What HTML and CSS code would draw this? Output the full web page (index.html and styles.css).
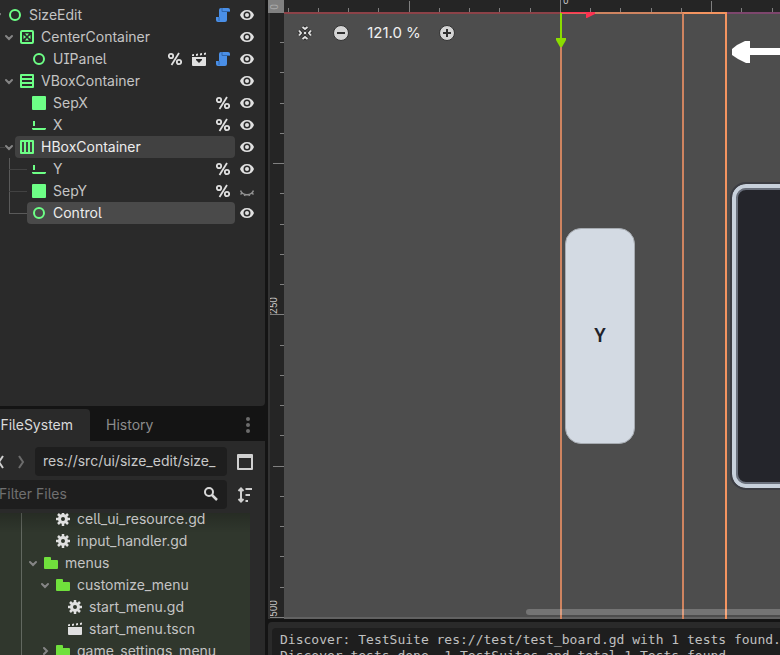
FILE: index.html
```html
<!DOCTYPE html>
<html lang="en">
<head>
    <meta charset="UTF-8">
    <meta name="viewport" content="width=device-width, initial-scale=1.0">
    <title>SizeEdit - Scene Editor</title>
    <link rel="stylesheet" href="styles.css">
</head>
<body>
    <!-- Shared icons -->
    <svg class="sprite" aria-hidden="true">
        <symbol id="i-control" viewBox="0 0 14 14"><circle cx="7" cy="7" r="5" fill="none" stroke="#6dff86" stroke-width="2"/></symbol>
        <symbol id="i-center" viewBox="0 0 14 14"><rect x="1" y="1" width="12" height="12" rx="1" fill="none" stroke="#6dff86" stroke-width="2"/><path d="M5 3.500h4L7 6zM5 10.500h4L7 8zM3.500 5v4L6 7zM10.500 5v4L8 7z" fill="#6dff86"/></symbol>
        <symbol id="i-vbox" viewBox="0 0 14 14"><path d="M1 1h12v12H1zM1 5h12M1 9h12" fill="none" stroke="#6dff86" stroke-width="2" stroke-linejoin="round"/></symbol>
        <symbol id="i-hbox" viewBox="0 0 14 14"><path d="M1 1h12v12H1zM5 1v12M9 1v12" fill="none" stroke="#6dff86" stroke-width="2" stroke-linejoin="round"/></symbol>
        <symbol id="i-rect" viewBox="0 0 14 14"><rect width="14" height="14" rx="1" fill="#6dff86"/></symbol>
        <symbol id="i-line" viewBox="0 0 14 14"><path d="M1 3h2v5H1zM0 10h14v1l-1 1H1l-1-1z" fill="#6dff86"/></symbol>
        <symbol id="i-eye" viewBox="0 0 14 14"><path d="M7 2C3.500 2 1 4 0 7c1 3 3.500 5 7 5s6-2 7-5c-1-3-3.500-5-7-5zm0 1.500a3.500 3.500 0 1 1 0 7 3.500 3.500 0 0 1 0-7z" fill="#e0e0e0" fill-rule="evenodd"/><circle cx="7" cy="7" r="2" fill="#e0e0e0"/></symbol>
        <symbol id="i-hidden" viewBox="0 0 14 14"><path d="M.5 6.500c2 5.500 11 5.500 13 0M2.500 8.500L.5 10.500M5 10l-.5 2M9 10l.5 2M11.500 8.500l2 2" fill="none" stroke="#929292" stroke-width="1.500"/></symbol>
        <symbol id="i-percent" viewBox="0 0 14 14"><circle cx="3" cy="4" r="2.200" fill="none" stroke="#e0e0e0" stroke-width="1.800"/><circle cx="11" cy="10" r="2.200" fill="none" stroke="#e0e0e0" stroke-width="1.800"/><path d="M11 1L3.500 13" stroke="#e0e0e0" stroke-width="1.800"/></symbol>
        <symbol id="i-script" viewBox="0 0 14 14"><path d="M5 0h7a2 2 0 0 1 2 2v2h-3v8a2 2 0 0 1-2 2H2a2 2 0 0 1-2-2V9h3V2a2 2 0 0 1 2-2z" fill="#4a8fe7"/><path d="M6 0v3.500h8M3 9v4" fill="none" stroke="#2f66ad" stroke-width="1"/></symbol>
        <symbol id="i-open" viewBox="0 0 14 14"><path d="M0 5h14v8a1 1 0 0 1-1 1H1a1 1 0 0 1-1-1z" fill="#e0e0e0"/><path d="M0 2.500L2 2v2H0zM4 2l2-.5v2L4 4zM8 1.500L10 1v2l-2 .5zM12 1l2-.5v2l-2 .5z" fill="#e0e0e0"/><path d="M4 7h6v1l-3 3-3-3z" fill="#2a2a2a"/></symbol>
        <symbol id="i-scene" viewBox="0 0 14 14"><path d="M0 5h14v7a1 1 0 0 1-1 1H1a1 1 0 0 1-1-1z" fill="#e0e0e0"/><path d="M0 2.500L2 2v2H0zM4 2l2-.5v2L4 4zM8 1.500L10 1v2l-2 .5zM12 1l2-.5v2l-2 .5z" fill="#e0e0e0"/></symbol>
        <symbol id="i-gear" viewBox="0 0 14 14"><circle cx="7" cy="7" r="3.500" fill="none" stroke="#e0e0e0" stroke-width="3"/><path d="M7 0v3M7 11v3M0 7h3M11 7h3M2 2l2 2M10 10l2 2M2 12l2-2M10 4l2-2" stroke="#e0e0e0" stroke-width="2.500"/></symbol>
        <symbol id="i-folder" viewBox="0 0 14 14"><path d="M1 1h5a1 1 0 0 1 1 1v2h6a1 1 0 0 1 1 1v7a1 1 0 0 1-1 1H1a1 1 0 0 1-1-1V2a1 1 0 0 1 1-1z" fill="#70e03c"/></symbol>
        <symbol id="i-down" viewBox="0 0 12 12"><path d="M3 5l3 3 3-3" fill="none" stroke="#858585" stroke-width="2" stroke-linecap="round"/></symbol>
        <symbol id="i-right" viewBox="0 0 12 12"><path d="M5 3l3 3-3 3" fill="none" stroke="#858585" stroke-width="2" stroke-linecap="round"/></symbol>
    </svg>

    <aside class="dock">
        <section class="panel scene">
            <ul class="tree">
                <li>
                    <div class="row"><svg class="toggle"><use href="#i-down"/></svg><div class="item"><svg class="icon"><use href="#i-control"/></svg><span class="name">SizeEdit</span><svg class="icon"><use href="#i-script"/></svg></div><svg class="icon eye"><use href="#i-eye"/></svg></div>
                    <ul>
                        <li>
                            <div class="row"><svg class="toggle"><use href="#i-down"/></svg><div class="item"><svg class="icon"><use href="#i-center"/></svg><span class="name">CenterContainer</span></div><svg class="icon eye"><use href="#i-eye"/></svg></div>
                            <ul>
                                <li><div class="row"><span class="toggle"></span><div class="item"><svg class="icon"><use href="#i-control"/></svg><span class="name">UIPanel</span><svg class="icon"><use href="#i-percent"/></svg><svg class="icon"><use href="#i-open"/></svg><svg class="icon"><use href="#i-script"/></svg></div><svg class="icon eye"><use href="#i-eye"/></svg></div></li>
                            </ul>
                        </li>
                        <li>
                            <div class="row"><svg class="toggle"><use href="#i-down"/></svg><div class="item"><svg class="icon"><use href="#i-vbox"/></svg><span class="name">VBoxContainer</span></div><svg class="icon eye"><use href="#i-eye"/></svg></div>
                            <ul>
                                <li><div class="row"><span class="toggle"></span><div class="item"><svg class="icon"><use href="#i-rect"/></svg><span class="name">SepX</span><svg class="icon"><use href="#i-percent"/></svg></div><svg class="icon eye"><use href="#i-eye"/></svg></div></li>
                                <li><div class="row"><span class="toggle"></span><div class="item"><svg class="icon"><use href="#i-line"/></svg><span class="name">X</span><svg class="icon"><use href="#i-percent"/></svg></div><svg class="icon eye"><use href="#i-eye"/></svg></div></li>
                            </ul>
                        </li>
                        <li>
                            <div class="row branch"><svg class="toggle"><use href="#i-down"/></svg><div class="item selected"><svg class="icon"><use href="#i-hbox"/></svg><span class="name">HBoxContainer</span></div><svg class="icon eye"><use href="#i-eye"/></svg></div>
                            <ul class="guides">
                                <li><div class="row"><span class="toggle"></span><div class="item"><svg class="icon"><use href="#i-line"/></svg><span class="name">Y</span><svg class="icon"><use href="#i-percent"/></svg></div><svg class="icon eye"><use href="#i-eye"/></svg></div></li>
                                <li><div class="row"><span class="toggle"></span><div class="item"><svg class="icon"><use href="#i-rect"/></svg><span class="name">SepY</span><svg class="icon"><use href="#i-percent"/></svg></div><svg class="icon eye"><use href="#i-hidden"/></svg></div></li>
                                <li class="active"><div class="row"><span class="toggle"></span><div class="item selected focus"><svg class="icon"><use href="#i-control"/></svg><span class="name">Control</span></div><svg class="icon eye"><use href="#i-eye"/></svg></div></li>
                            </ul>
                        </li>
                    </ul>
                </li>
            </ul>
        </section>

        <section class="filesystem">
            <div class="tabs">
                <button class="tab current">FileSystem</button>
                <button class="tab">History</button>
                <button class="menu" aria-label="Dock options"><svg width="4" height="16"><circle cx="2" cy="2" r="2"/><circle cx="2" cy="8" r="2"/><circle cx="2" cy="14" r="2"/></svg></button>
            </div>
            <div class="files">
                <div class="bar">
                    <button class="nav" aria-label="Back"><svg width="8" height="14"><path d="M6 1L2 7l4 6"/></svg></button>
                    <button class="nav off" aria-label="Forward"><svg width="8" height="14"><path d="M2 1l4 6-4 6"/></svg></button>
                    <input class="field path" type="text" aria-label="Path" value="res://src/ui/size_edit/size_">
                    <button class="tool" aria-label="Toggle split mode"><svg width="16" height="16"><path d="M1 1h14v14H1zM0 3h16" fill="none" stroke="#d0d0d0" stroke-width="2" stroke-linejoin="round"/></svg></button>
                </div>
                <div class="bar">
                    <div class="filter">
                        <input class="field" type="text" aria-label="Filter files" placeholder="Filter Files">
                        <svg class="search" width="14" height="14"><circle cx="5" cy="5" r="4" fill="none" stroke="#d8d8d8" stroke-width="2"/><path d="M8 8l5 5" stroke="#d8d8d8" stroke-width="2.500"/></svg>
                    </div>
                    <button class="tool" aria-label="Sort files"><svg width="16" height="16"><path d="M4 2v12M1.500 4L4 1.500 6.500 4M1.500 12L4 14.500 6.500 12M8.500 2H15M8.500 8H13M8.500 14H11" fill="none" stroke="#d0d0d0" stroke-width="2"/></svg></button>
                </div>
                <div class="filetree">
                    <ul class="tree">
                        <li>
                            <ul>
                                <li><div class="row"><span class="toggle"></span><div class="item"><svg class="icon"><use href="#i-gear"/></svg><span class="name">cell_ui_resource.gd</span></div></div></li>
                                <li><div class="row"><span class="toggle"></span><div class="item"><svg class="icon"><use href="#i-gear"/></svg><span class="name">input_handler.gd</span></div></div></li>
                            </ul>
                        </li>
                        <li>
                            <div class="row"><svg class="toggle"><use href="#i-down"/></svg><div class="item"><svg class="icon"><use href="#i-folder"/></svg><span class="name">menus</span></div></div>
                            <ul>
                                <li>
                                    <div class="row"><svg class="toggle"><use href="#i-down"/></svg><div class="item"><svg class="icon"><use href="#i-folder"/></svg><span class="name">customize_menu</span></div></div>
                                    <ul>
                                        <li><div class="row"><span class="toggle"></span><div class="item"><svg class="icon"><use href="#i-gear"/></svg><span class="name">start_menu.gd</span></div></div></li>
                                        <li><div class="row"><span class="toggle"></span><div class="item"><svg class="icon"><use href="#i-scene"/></svg><span class="name">start_menu.tscn</span></div></div></li>
                                    </ul>
                                </li>
                                <li><div class="row"><svg class="toggle"><use href="#i-right"/></svg><div class="item"><svg class="icon"><use href="#i-folder"/></svg><span class="name">game_settings_menu</span></div></div></li>
                            </ul>
                        </li>
                    </ul>
                </div>
            </div>
        </section>
    </aside>

    <main class="editor">
        <div class="viewport">
            <div class="corner"><span>0</span></div>
            <div class="ruler-top">
                <svg width="100%" height="13" shape-rendering="crispEdges"><path d="M4.500 8v4M34.500 8v4M64.500 8v4M94.500 8v4M125.500 1v11M155.500 8v4M185.500 8v4M215.500 8v4M246.500 8v4M276.500 0v12M306.500 8v4M336.500 8v4M367.500 8v4M397.500 8v4M427.500 1v11M457.500 8v4M488.500 8v4"/></svg>
                <span class="mark zero">0</span>
            </div>
            <div class="ruler-left">
                <svg width="16" height="100%" shape-rendering="crispEdges"><path d="M12 29.500h4M12 59.500h4M12 90.500h4M12 120.500h4M5 150.500h11M12 180.500h4M12 211.500h4M12 241.500h4M12 271.500h4M0 301.500h16M12 332.500h4M12 362.500h4M12 392.500h4M12 422.500h4M5 453.500h11M12 483.500h4M12 513.500h4M12 543.500h4M12 574.500h4M0 604.500h16"/></svg>
                <span class="mark m250">250</span>
                <span class="mark m500">500</span>
            </div>
            <div class="canvas">
                <div class="axis"></div>
                <div class="bounds outer"></div>
                <div class="bounds inner"></div>
                <svg class="gizmo" width="40" height="40"><path d="M5 0h27" stroke="#fc3351" stroke-width="3"/><path d="M30 0v6h1l8-4V0z" fill="#fc3351"/><path d="M5 1v25" stroke="#8bdc00" stroke-width="2"/><path d="M0 26h10v2L6 35H4L0 28z" fill="#8bdc00"/></svg>
                <svg class="pointer" width="48" height="22"><path d="M0 8L5 4l8-4h5v7h30v7H18v8h-4l-8-4-6-4z" fill="#fff"/></svg>
                <div class="card">Y</div>
                <div class="frame"></div>
                <div class="zoom">
                    <button aria-label="Center view"><svg width="16" height="16"><path d="M5.500 2L8 4l2.500-2M5.500 14L8 12l2.500 2M2 5.500L4 8l-2 2.500M14 5.500L12 8l2 2.500" fill="none" stroke="#282828" stroke-width="4"/><path d="M5.500 2L8 4l2.500-2M5.500 14L8 12l2.500 2M2 5.500L4 8l-2 2.500M14 5.500L12 8l2 2.500" fill="none" stroke="#e0e0e0" stroke-width="2"/><rect x="7" y="7" width="2" height="2" fill="#e0e0e0"/></svg></button>
                    <button aria-label="Zoom out"><svg width="16" height="16"><circle cx="8" cy="8" r="7.500" fill="#d4d4d4" stroke="#333"/><path d="M4 8h8" stroke="#303030" stroke-width="2"/></svg></button>
                    <button class="level">121.0 %</button>
                    <button aria-label="Zoom in"><svg width="16" height="16"><circle cx="8" cy="8" r="7.500" fill="#d4d4d4" stroke="#333"/><path d="M4 8h8M8 4v8" stroke="#303030" stroke-width="2"/></svg></button>
                </div>
                <div class="scrollbar"></div>
            </div>
        </div>
        <section class="output">
            <pre>Discover: TestSuite res://test/test_board.gd with 1 tests found.
Discover tests done, 1 TestSuites and total 1 Tests found.</pre>
        </section>
    </main>
</body>
</html>
```
FILE: styles.css
```css
* {
    box-sizing: border-box;
}

body {
    margin: 0;
    height: 100vh;
    display: grid;
    grid-template-columns: 265px 1fr;
    grid-template-rows: 100%;
    gap: 3px;
    overflow: hidden;
    background: #141414;
    color: #c4c4c4;
    font: 14px/22px Inter, "Noto Sans", sans-serif;
    font-feature-settings: "ss04", "cv05", "cv08";
}

button {
    padding: 0;
    border: 0;
    background: none;
    color: inherit;
    font: inherit;
    font-feature-settings: inherit;
    cursor: pointer;
}

svg {
    display: block;
    flex: none;
}

.sprite {
    position: absolute;
    width: 0;
    height: 0;
}

/* Docks */
.dock {
    display: flex;
    flex-direction: column;
    gap: 3px;
    min-width: 0;
    overflow: hidden;
}

.panel {
    background: #2a2a2a;
}

.scene {
    flex: 1;
    padding-top: 4px;
    border-radius: 0 0 4px 0;
    overflow: hidden;
}

/* Trees */
.tree,
.tree ul {
    margin: 0;
    padding: 0;
    list-style: none;
}

.tree ul {
    padding-left: 12px;
}

.scene .tree {
    margin-left: -9px;
}

.row {
    display: flex;
    align-items: center;
    height: 22px;
}

.toggle {
    flex: none;
    width: 12px;
    height: 12px;
}

.icon {
    width: 14px;
    height: 14px;
}

.item {
    flex: 1;
    display: flex;
    align-items: center;
    gap: 10px;
    height: 22px;
    padding: 0 5px;
    border-radius: 4px;
}

.name {
    flex: 1;
    margin-left: -3px;
    white-space: nowrap;
}

.eye {
    margin: 0 11px 0 5px;
}

.selected {
    background: #414141;
    color: #ededed;
}

.focus {
    background: #4a4a4a;
}

.branch,
.guides,
.guides li {
    position: relative;
}

.branch::before,
.guides::before,
.guides li::before {
    content: "";
    position: absolute;
    background: #424242;
}

.branch::before {
    left: -6px;
    top: 11px;
    width: 8px;
    height: 1px;
}

.guides::before {
    left: 6px;
    top: 0;
    bottom: 11px;
    width: 1px;
    background: #5a5a5a;
}

.guides li::before {
    left: -6px;
    top: 11px;
    width: 18px;
    height: 1px;
}

.guides .active::before {
    background: #5a5a5a;
}

/* FileSystem dock */
.filesystem {
    display: flex;
    flex-direction: column;
    height: 246px;
}

.tabs {
    display: flex;
    height: 32px;
}

.tab {
    padding: 0 16px;
    color: #8c8c8c;
}

.tab.current {
    width: 90px;
    padding: 0 17px 0 0;
    border-radius: 0 4px 0 0;
    background: #2a2a2a;
    color: #dadada;
    text-align: right;
}

.menu {
    margin: 0 15px 0 auto;
    fill: #6c6c6c;
}

.files {
    flex: 1;
    display: flex;
    flex-direction: column;
    gap: 4px;
    min-height: 0;
    padding-top: 6px;
    background: #2a2a2a;
}

.bar {
    display: flex;
    align-items: center;
    height: 29px;
    padding-right: 12px;
}

.nav {
    width: 8px;
    margin-left: -3px;
    fill: none;
    stroke: #d0d0d0;
    stroke-width: 2;
}

.nav.off {
    margin: 0 10px 0 12px;
    stroke: #6c6c6c;
}

.field {
    width: 100%;
    min-width: 0;
    height: 29px;
    padding: 0 8px 2px;
    border: 0;
    border-radius: 4px;
    outline: 0;
    background: #1e1e1e;
    color: #c8c8c8;
    font: inherit;
    font-feature-settings: inherit;
}

.field::placeholder {
    color: #707070;
    opacity: 1;
}

.path {
    flex: 1;
}

.tool {
    margin-left: 10px;
}

.filter {
    flex: 1;
    position: relative;
    margin-left: -9px;
}

.filter .field {
    display: block;
}

.search {
    position: absolute;
    right: 9px;
    top: 7px;
}

.filetree {
    position: relative;
    flex: 1;
    margin-right: 15px;
    overflow: hidden;
    background: #30372d;
}

.filetree::before {
    content: "";
    position: absolute;
    left: 21px;
    top: 0;
    bottom: 0;
    width: 1px;
    background: #626860;
}

.filetree::after {
    content: "";
    position: absolute;
    inset: 0 0 auto;
    height: 20px;
    background: linear-gradient(rgba(0, 0, 0, 0.2), transparent);
}

.filetree .tree {
    position: relative;
    z-index: 1;
    margin-top: -5px;
    padding-left: 27px;
}

/* 2D editor */
.editor {
    display: flex;
    flex-direction: column;
    gap: 3px;
    min-width: 0;
}

.viewport {
    flex: 1;
    display: grid;
    grid-template-columns: 16px 1fr;
    grid-template-rows: 13px 1fr;
    min-height: 0;
    overflow: hidden;
    background: #252525;
}

.corner {
    display: flex;
    align-items: center;
    padding-left: 2px;
    background: #808080;
    color: #a8a8a8;
    font: 10px/10px Roboto, sans-serif;
}

.corner span {
    writing-mode: vertical-rl;
    transform: rotate(180deg);
}

.ruler-top,
.ruler-left {
    position: relative;
    overflow: hidden;
    stroke: #808080;
}

.ruler-left {
    border-left: 2px solid #333;
}

.ruler-left svg {
    margin-left: -2px;
}

.mark {
    position: absolute;
    color: #c0c0c0;
    font: 10px/10px Roboto, sans-serif;
}

.zero {
    left: 279px;
    top: -4px;
}

.m250,
.m500 {
    left: -1px;
    writing-mode: vertical-rl;
    transform: rotate(180deg);
}

.m250 {
    top: 284px;
}

.m500 {
    top: 587px;
}

.canvas {
    position: relative;
    border-bottom: 2px solid #626262;
    background: #4d4d4d;
}

.axis {
    position: absolute;
    left: 0;
    right: 0;
    top: -1px;
    height: 2px;
    background: linear-gradient(90deg, #8c4248 440px, #7d466d 444px);
}

.bounds {
    position: absolute;
    top: -1px;
    bottom: -2px;
    border: solid #cf8460;
    border-width: 2px 2px 0;
}

.outer {
    left: 276px;
    width: 124px;
}

.inner {
    left: 398px;
    width: 45px;
    border-color: #f49460;
    border-left-color: #cf8460;
}

.gizmo {
    position: absolute;
    left: 272px;
    top: -1px;
}

.pointer {
    position: absolute;
    left: 448px;
    top: 28px;
}

.card {
    position: absolute;
    left: 281px;
    top: 215px;
    width: 70px;
    height: 216px;
    border: 1px solid #a6abb1;
    border-radius: 16px;
    background: #d3dae3;
    color: #20222a;
    font: 600 19px/212px "Noto Sans", sans-serif;
    text-align: center;
}

.frame {
    position: absolute;
    left: 448px;
    right: -20px;
    top: 171px;
    height: 304px;
    border: 4px solid #c8d1dc;
    border-radius: 14px;
    outline: 2px solid #3c3d43;
    background: #24252b;
    box-shadow: inset 0 0 0 2px #6a707c;
}

.zoom {
    position: absolute;
    left: 13px;
    top: 9px;
    display: flex;
    align-items: center;
    gap: 20px;
    color: #f0f0f0;
    text-shadow: 0 0 2px #222;
}

.level {
    width: 62px;
    margin: 0 -6px;
    font-size: 15px;
}

.scrollbar {
    position: absolute;
    left: 242px;
    right: 0;
    bottom: 2px;
    height: 6px;
    border-radius: 3px 0 0 3px;
    background: rgba(255, 255, 255, 0.22);
}

/* Output panel */
.output {
    height: 33px;
    padding: 6px 0 0 4px;
    border-radius: 4px 0 0 0;
    overflow: hidden;
    background: #2a2a2a;
}

.output pre {
    margin: 0;
    padding: 4px 8px;
    border-radius: 4px 0 0 0;
    background: #1e1e1e;
    color: #c0c0c0;
    font: 13px/16px "DejaVu Sans Mono", monospace;
}
```
